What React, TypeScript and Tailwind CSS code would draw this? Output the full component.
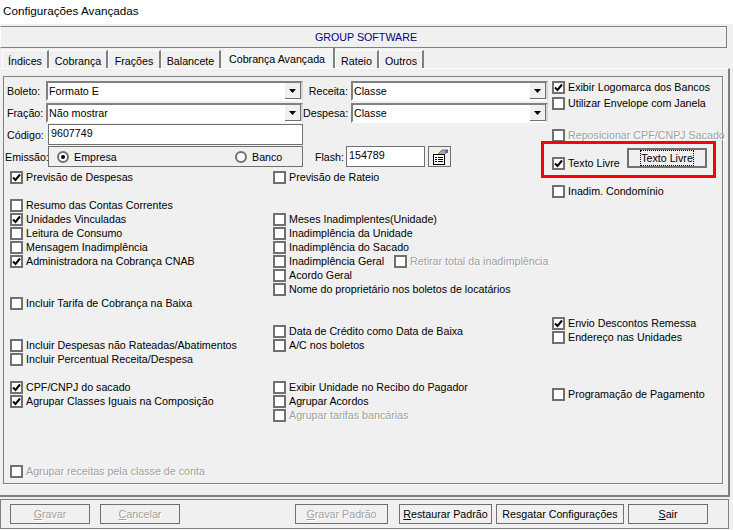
import React from "react";

const FONT = "font-['Liberation_Sans',sans-serif] text-[10.7px] leading-[14px]";
const DISABLED_TEXT = "text-[#a0a0a0] [text-shadow:1px_1px_0_#fff]";

function CheckBox({ checked = false }: { checked?: boolean }) {
  return (
    <span className="w-[13px] h-[13px] shrink-0 border-2 border-[#707070] bg-white flex items-center justify-center">
      {checked && (
        <svg width="9" height="9" viewBox="0 0 9 9">
          <path d="M1 4.5 L3.5 7 L8 1.5" fill="none" stroke="#000" strokeWidth="2" />
        </svg>
      )}
    </span>
  );
}

function Check({
  label,
  checked = false,
  disabled = false,
  className = "",
}: {
  label: string;
  checked?: boolean;
  disabled?: boolean;
  className?: string;
}) {
  return (
    <div className={`flex items-center h-[14px] whitespace-nowrap ${className}`}>
      <CheckBox checked={checked} />
      <span className={`ml-[3px] ${disabled ? DISABLED_TEXT : "text-black"}`}>{label}</span>
    </div>
  );
}

function Combo({ value, className = "" }: { value: string; className?: string }) {
  return (
    <div className={`h-[20px] flex border-2 border-t-[#808080] border-l-[#808080] border-r-[#d8d8d8] border-b-[#fff] bg-white ${className}`}>
      <span className="flex-1 pl-[1px] leading-[16px] text-black">{value}</span>
      <span className="w-[16px] bg-[#f0f0f0] border-r border-b border-[#707070] flex items-center justify-center">
        <svg width="7" height="4" viewBox="0 0 7 4">
          <path d="M0 0 H7 L3.5 4 Z" fill="#000" />
        </svg>
      </span>
    </div>
  );
}

function Radio({ label, checked = false, className = "" }: { label: string; checked?: boolean; className?: string }) {
  return (
    <div className={`flex items-center ${className}`}>
      <span className="w-[12px] h-[12px] rounded-full border-2 border-[#707070] bg-white flex items-center justify-center">
        {checked && <span className="w-[4px] h-[4px] rounded-full bg-black" />}
      </span>
      <span className="ml-[5px] pt-[1px] text-black">{label}</span>
    </div>
  );
}

function FooterButton({
  mnemonic,
  rest,
  disabled = false,
  className = "",
}: {
  mnemonic: string;
  rest: string;
  disabled?: boolean;
  className?: string;
}) {
  return (
    <div className={`h-[20px] shrink-0 border border-[#707070] flex items-center justify-center whitespace-nowrap ${disabled ? DISABLED_TEXT : "text-black"} ${className}`}>
      <span>
        <u>{mnemonic}</u>
        {rest}
      </span>
    </div>
  );
}

function NotepadIcon() {
  return (
    <svg width="16" height="16" viewBox="0 0 16 16">
      <path d="M5 6 L10 1 H14 V4 L11 7 Z" fill="#a8a8a8" stroke="#555" strokeWidth="0.7" />
      <path d="M15 0.5 V4" stroke="#0000c0" strokeWidth="1.2" />
      <rect x="1.5" y="5.5" width="11" height="10" fill="#fff" stroke="#000" />
      <path d="M3 8.5 H5 M6 8.5 H11 M3 10.5 H5 M6 10.5 H11 M3 12.5 H5 M6 12.5 H11" stroke="#000" />
    </svg>
  );
}

const tabs = [
  { label: "Índices", width: "w-[47px]" },
  { label: "Cobrança", width: "w-[59px]" },
  { label: "Frações", width: "w-[53px]" },
  { label: "Balancete", width: "w-[60px]" },
  { label: "Cobrança Avançada", width: "w-[114px]", active: true },
  { label: "Rateio", width: "w-[44px]" },
  { label: "Outros", width: "w-[45px]" },
];

export default function App() {
  return (
    <div className={`w-[733px] h-[530px] bg-white flex flex-col overflow-hidden ${FONT}`}>
      {/* Window title */}
      <div className="h-[24px] pl-[3px] pt-[4px] text-[11.7px] text-black shrink-0">Configurações Avançadas</div>

      <div className="flex-1 bg-[#f0f0f0] flex flex-col pt-[2px]">
        <div className="h-[22px] mr-[6px] pl-[5px] border border-[#808080] border-l-white flex items-center justify-center text-[#000080]">
          GROUP SOFTWARE
        </div>

        {/* Tabs */}
        <div className="flex items-end h-[20px] pl-[2px]">
          {tabs.map((t) =>
            t.active ? (
              <div key={t.label} className={`${t.width} h-[20px] pt-[2px] bg-[#f4f4f4] border-r-2 border-[#808080] flex items-center justify-center text-black`}>
                {t.label}
              </div>
            ) : (
              <div
                key={t.label}
                className={`${t.width} h-[18px] pt-[3px] border-t border-t-white border-l border-l-white border-r-2 border-r-[#808080] flex items-center justify-center text-black`}
              >
                {t.label}
              </div>
            )
          )}
        </div>

        {/* Page */}
        <div className="h-[429px] border-t border-t-white border-r-2 border-r-[#808080] border-b-2 border-b-[#808080] mr-[3px] pl-[3px] pr-[5px] pt-[7px]">
          <div className="h-[408px] border border-[#808080] shadow-[1px_1px_0_#fff] flex">
            <div className="w-[548px] shrink-0 pt-[4px] flex flex-col">
              {/* Form rows */}
              <div className="flex items-center">
                <span className="w-[42px] pl-[3px] text-black">Boleto:</span>
                <Combo value="Formato E" className="w-[257px]" />
                <span className="w-[48px] pr-[3px] text-right text-black">Receita:</span>
                <Combo value="Classe" className="w-[197px]" />
              </div>
              <div className="flex items-center mt-[2px]">
                <span className="w-[42px] pl-[3px] text-black">Fração:</span>
                <Combo value="Não mostrar" className="w-[257px]" />
                <span className="w-[48px] pr-[3px] text-right text-black">Despesa:</span>
                <Combo value="Classe" className="w-[197px]" />
              </div>
              <div className="flex items-center mt-[1px]">
                <span className="w-[44px] pl-[3px] pt-[1px] text-black">Código:</span>
                <div className="w-[255px] h-[21px] border border-[#707070] bg-white pl-[2px] leading-[16px] text-black">9607749</div>
              </div>
              <div className="flex items-center mt-[1px]">
                <span className="w-[44px] pl-[1px] pt-[1px] text-black">Emissão:</span>
                <div className="w-[255px] h-[21px] border border-[#707070] pl-[8px] flex items-center">
                  <Radio label="Empresa" checked className="w-[178px]" />
                  <Radio label="Banco" />
                </div>
                <span className="w-[43px] pr-[2px] pt-[1px] text-right text-black">Flash:</span>
                <div className="w-[79px] h-[21px] border border-[#707070] bg-white pl-[2px] leading-[16px] text-black">154789</div>
                <div className="ml-[3px] w-[23px] h-[21px] border border-[#707070] flex items-center justify-center">
                  <NotepadIcon />
                </div>
              </div>

              {/* Option columns */}
              <div className="flex mt-[3px]">
                <div className="w-[263px] shrink-0 pl-[6px] flex flex-col">
                  <Check label="Previsão de Despesas" checked />
                  <Check label="Resumo das Contas Correntes" className="mt-[14px]" />
                  <Check label="Unidades Vinculadas" checked />
                  <Check label="Leitura de Consumo" />
                  <Check label="Mensagem Inadimplência" />
                  <Check label="Administradora na Cobrança CNAB" checked />
                  <Check label="Incluir Tarifa de Cobrança na Baixa" className="mt-[28px]" />
                  <Check label="Incluir Despesas não Rateadas/Abatimentos" className="mt-[28px]" />
                  <Check label="Incluir Percentual Receita/Despesa" />
                  <Check label="CPF/CNPJ do sacado" checked className="mt-[14px]" />
                  <Check label="Agrupar Classes Iguais na Composição" checked />
                  <Check label="Agrupar receitas pela classe de conta" disabled className="mt-[56px]" />
                </div>
                <div className="pl-[6px] flex flex-col">
                  <Check label="Previsão de Rateio" />
                  <Check label="Meses Inadimplentes(Unidade)" className="mt-[28px]" />
                  <Check label="Inadimplência da Unidade" />
                  <Check label="Inadimplência do Sacado" />
                  <div className="flex">
                    <Check label="Inadimplência Geral" className="w-[121px]" />
                    <Check label="Retirar total da inadimplência" disabled />
                  </div>
                  <Check label="Acordo Geral" />
                  <Check label="Nome do proprietário nos boletos de locatários" />
                  <Check label="Data de Crédito como Data de Baixa" className="mt-[28px]" />
                  <Check label="A/C nos boletos" />
                  <Check label="Exibir Unidade no Recibo do Pagador" className="mt-[28px]" />
                  <Check label="Agrupar Acordos" />
                  <Check label="Agrupar tarifas bancárias" disabled />
                </div>
              </div>
            </div>

            {/* Right column */}
            <div className="pt-[3px] flex flex-col">
              <Check label="Exibir Logomarca dos Bancos" checked />
              <Check label="Utilizar Envelope com Janela" className="mt-[2px]" />
              <Check label="Reposicionar CPF/CNPJ Sacado" disabled className="mt-[18px]" />
              <div className="relative flex items-end h-[22px] mt-[6px]">
                <Check label="Texto Livre" checked className="w-[75px]" />
                <div className="self-start w-[80px] h-[20px] border-2 border-[#707070] flex items-center justify-center text-black">
                  <span className="outline-1 outline-dotted outline-black leading-[14px]">Texto Livre</span>
                </div>
                {/* Red annotation */}
                <div className="absolute left-[-11px] top-[-7px] w-[175px] h-[37px] border-[3px] border-[#ff0000]" />
              </div>
              <Check label="Inadim. Condomínio" className="mt-[14px]" />
              <Check label="Envio Descontos Remessa" checked className="mt-[118px]" />
              <Check label="Endereço nas Unidades" />
              <Check label="Programação de Pagamento" className="mt-[43px]" />
            </div>
          </div>
        </div>

        {/* Footer */}
        <div className="h-[30px] mt-[2px] mr-[4px] border border-[#808080] shadow-[0_1px_0_#fff] flex items-center pl-[9px]">
          <FooterButton mnemonic="G" rest="ravar" disabled className="w-[80px]" />
          <FooterButton mnemonic="C" rest="ancelar" disabled className="w-[80px] ml-[10px]" />
          <FooterButton mnemonic="G" rest="ravar Padrão" disabled className="w-[93px] ml-[115px]" />
          <FooterButton mnemonic="R" rest="estaurar Padrão" className="w-[93px] ml-[11px]" />
          <FooterButton mnemonic="" rest="Resgatar Configurações" className="w-[128px] ml-[4px]" />
          <FooterButton mnemonic="S" rest="air" className="w-[80px] ml-[4px]" />
        </div>
      </div>
    </div>
  );
}
